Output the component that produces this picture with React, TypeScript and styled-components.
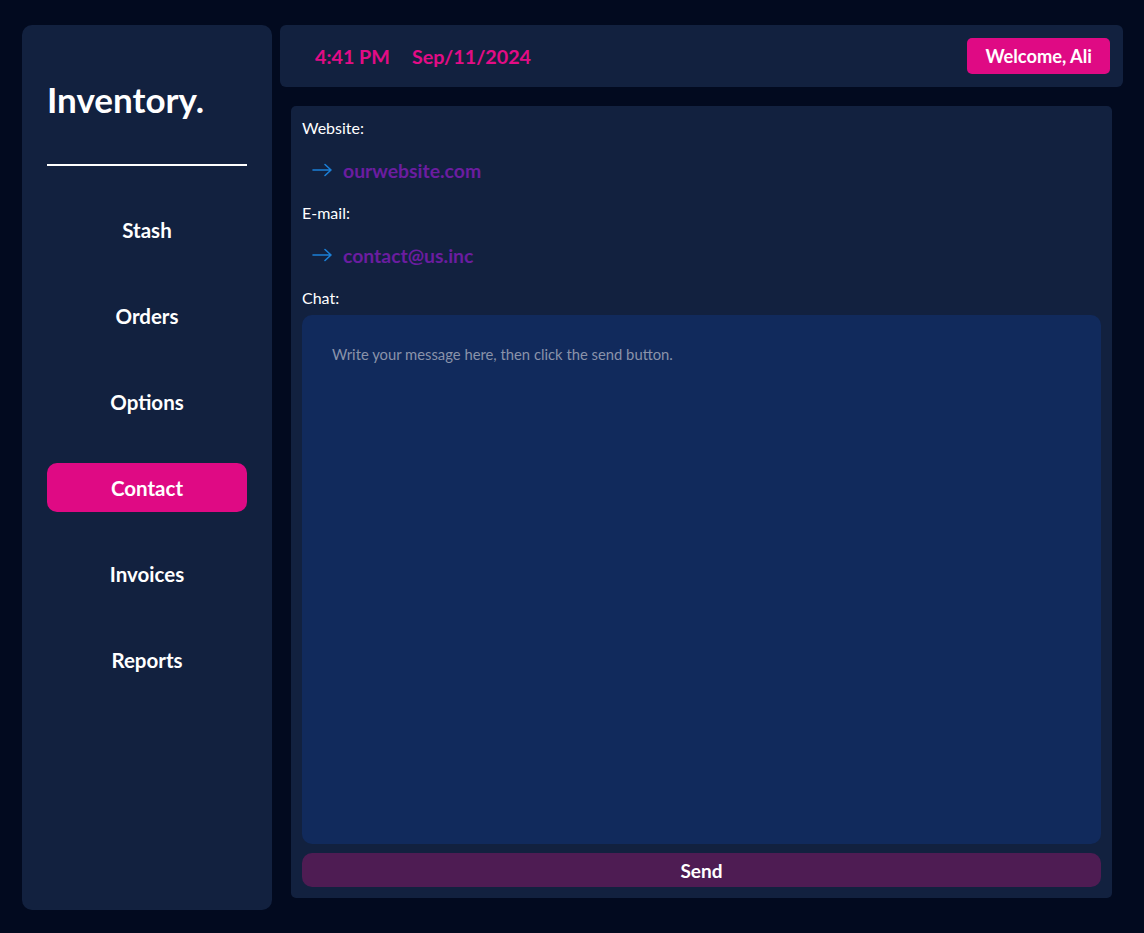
import React from "react";
import styled, { createGlobalStyle } from "styled-components";

const GlobalStyle = createGlobalStyle`
  html, body {
    margin: 0;
    padding: 0;
    background: #020a1f;
    font-family: Lato, "Noto Sans", sans-serif;
  }
  * { box-sizing: border-box; }
`;

const navItems = ["Stash", "Orders", "Options", "Contact", "Invoices", "Reports"];

const Arrow: React.FC = () => (
  <svg width="21" height="14" viewBox="0 0 21 14" fill="none">
    <path
      d="M1 7h18M13 1.5L19 7l-6 5.5"
      stroke="#1b7fd6"
      strokeWidth="1.6"
      strokeLinecap="round"
      strokeLinejoin="round"
    />
  </svg>
);

const App: React.FC = () => {
  return (
    <>
      <GlobalStyle />
      <Page>
        <SideBar>
          <Brand>Inventory.</Brand>
          <Divider />
          <Nav>
            {navItems.map((item) => (
              <NavItem key={item} $active={item === "Contact"}>
                {item}
              </NavItem>
            ))}
          </Nav>
        </SideBar>
        <Main>
          <Header>
            <Clock>
              <span>4:41 PM</span>
              <span>Sep/11/2024</span>
            </Clock>
            <Welcome>Welcome, Ali</Welcome>
          </Header>
          <Card>
            <Label>Website:</Label>
            <LinkRow>
              <Arrow />
              <LinkText>ourwebsite.com</LinkText>
            </LinkRow>
            <Label>E-mail:</Label>
            <LinkRow>
              <Arrow />
              <LinkText>contact@us.inc</LinkText>
            </LinkRow>
            <Label>Chat:</Label>
            <Message placeholder="Write your message here, then click the send button." />
            <SendButton>Send</SendButton>
          </Card>
        </Main>
      </Page>
    </>
  );
};

const Page = styled.div`
  display: flex;
  gap: 8px;
  height: 933px;
  padding: 25px 21px 23px 22px;
`;

const SideBar = styled.aside`
  width: 250px;
  flex-shrink: 0;
  background: #12213f;
  border-radius: 10px;
  padding: 53px 25px 0;
  display: flex;
  flex-direction: column;
`;

const Brand = styled.h1`
  margin: 0;
  color: #ffffff;
  font-size: 35px;
  font-weight: 700;
  line-height: 42px;
`;

const Divider = styled.hr`
  margin: 44px 0 0;
  border: none;
  height: 2px;
  background: #ffffff;
`;

const Nav = styled.nav`
  margin-top: 39px;
  display: flex;
  flex-direction: column;
  gap: 37px;
`;

const NavItem = styled.div<{ $active?: boolean }>`
  height: 49px;
  display: flex;
  align-items: center;
  justify-content: center;
  border-radius: 10px;
  color: #ffffff;
  font-size: 20.5px;
  font-weight: 700;
  background: ${(p) => (p.$active ? "#df0a84" : "transparent")};
`;

const Main = styled.main`
  flex: 1;
  display: flex;
  flex-direction: column;
`;

const Header = styled.header`
  height: 62px;
  background: #12213f;
  border-radius: 6px;
  display: flex;
  align-items: center;
  justify-content: space-between;
  padding: 0 13px 0 35px;
`;

const Clock = styled.div`
  display: flex;
  gap: 22px;
  color: #e20c86;
  font-size: 19.7px;
  font-weight: 700;
`;

const Welcome = styled.button`
  height: 36px;
  padding: 0 18px;
  border: none;
  border-radius: 5px;
  background: #df0a84;
  color: #ffffff;
  font-family: Lato, sans-serif;
  font-size: 18.3px;
  font-weight: 700;
`;

const Card = styled.section`
  flex: 1;
  margin: 19px 11px 12px;
  background: #12213f;
  border-radius: 5px;
  padding: 12px 11px 11px;
  display: flex;
  flex-direction: column;
`;

const Label = styled.div`
  color: #ffffff;
  font-size: 16px;
  line-height: 20px;
`;

const LinkRow = styled.div`
  display: flex;
  align-items: center;
  gap: 10px;
  height: 24px;
  margin: 20px 0 21px;
  padding-left: 10px;
`;

const LinkText = styled.span`
  color: #6b1da0;
  font-size: 19.4px;
  font-weight: 700;
`;

const Message = styled.textarea`
  flex: 1;
  margin-top: 7px;
  resize: none;
  border: none;
  outline: none;
  border-radius: 10px;
  background: #112a5c;
  padding: 29px 30px;
  color: #ffffff;
  font-family: Lato, sans-serif;
  font-size: 14.8px;
  line-height: 20px;

  &::placeholder {
    color: #8a93aa;
  }
`;

const SendButton = styled.button`
  margin-top: 9px;
  height: 34px;
  border: none;
  border-radius: 10px;
  background: #4e1c53;
  color: #ffffff;
  font-family: Lato, sans-serif;
  font-size: 19px;
  font-weight: 700;
`;

export default App;
